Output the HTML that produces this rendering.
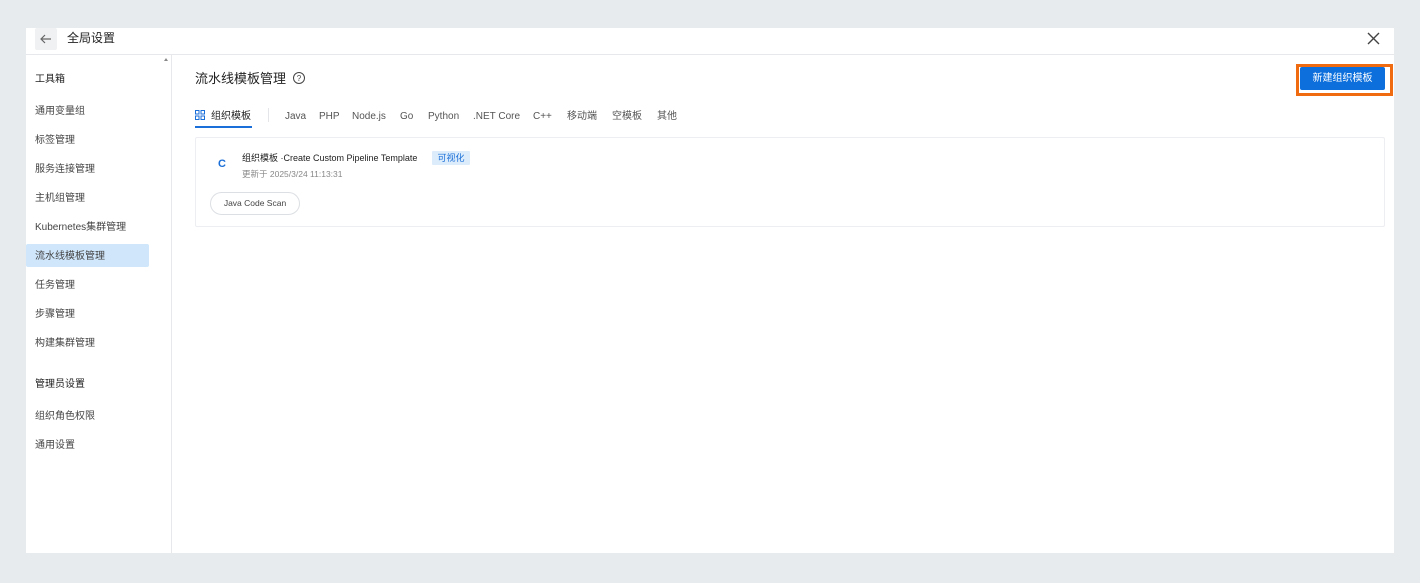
<!DOCTYPE html>
<html><head><meta charset="utf-8"><style>
*{margin:0;padding:0;box-sizing:border-box}
body{width:1420px;height:583px;background:#e8ebee;font-family:"Liberation Sans","Noto Sans CJK SC",sans-serif;position:relative;overflow:hidden;color:#333}
div{line-height:14px}
.panel{position:absolute;left:26px;top:28px;width:1368px;height:525px;background:#fff}
.hdr{position:absolute;left:0;top:0;width:1368px;height:27px;border-bottom:1px solid #e6e8eb}
.back{position:absolute;left:9px;top:0;width:22px;height:22px;background:#f0f1f3;border-radius:2px}
.ttl{position:absolute;left:41px;top:3px;font-size:12px;color:#222}
.side{position:absolute;left:0;top:27px;width:146px;height:498px;border-right:1px solid #e6e8eb}
.it{position:absolute;left:9px;font-size:10px;color:#444}
.sel{position:absolute;left:0;top:189px;width:123px;height:23px;background:#cfe6fb;border-radius:2px}
.a{position:absolute;font-size:10px;color:#555;top:110px}
</style></head><body>
<div class="panel">
 <div class="hdr">
  <div class="back"><svg width="22" height="22"><path d="M16 11H6M10 7l-4 4 4 4" stroke="#666" stroke-width="1.2" fill="none"/></svg></div>
  <div class="ttl">全局设置</div>
  <svg style="position:absolute;left:1340px;top:3px" width="16" height="16"><path d="M2 2l11 11M13 2L2 13" stroke="#444" stroke-width="1.4"/></svg>
 </div>
 <div class="side">
  <div style="position:absolute;left:138px;top:3px;width:0;height:0;border-left:2px solid transparent;border-right:2px solid transparent;border-bottom:3px solid #888"></div>
  <div class="sel"></div>
  <div class="it" style="top:18px;color:#222">工具箱</div>
  <div class="it" style="top:50px">通用变量组</div>
  <div class="it" style="top:79px">标签管理</div>
  <div class="it" style="top:108px">服务连接管理</div>
  <div class="it" style="top:137px">主机组管理</div>
  <div class="it" style="top:166px">Kubernetes集群管理</div>
  <div class="it" style="top:195px">流水线模板管理</div>
  <div class="it" style="top:224px">任务管理</div>
  <div class="it" style="top:253px">步骤管理</div>
  <div class="it" style="top:282px">构建集群管理</div>
  <div class="it" style="top:323px;color:#222">管理员设置</div>
  <div class="it" style="top:355px">组织角色权限</div>
  <div class="it" style="top:384px">通用设置</div>
 </div>
</div>
<div style="position:absolute;left:195px;top:72px;font-size:13px;color:#222">流水线模板管理</div>
<svg style="position:absolute;left:292px;top:71px" width="14" height="14"><circle cx="7" cy="7" r="5.5" stroke="#444" fill="none"/><text x="7" y="10" font-size="8" text-anchor="middle" fill="#444" font-family="Liberation Sans">?</text></svg>
<div style="position:absolute;left:1296px;top:64px;width:97px;height:32px;border:3px solid #f06a0f"></div>
<div style="position:absolute;left:1300px;top:67px;width:85px;height:23px;background:#0c6fdc;border-radius:2px;color:#fff;font-size:10px;text-align:center;line-height:23px">新建组织模板</div>
<svg style="position:absolute;left:195px;top:110px" width="10" height="10"><rect x="0.5" y="0.5" width="3.5" height="3.5" fill="none" stroke="#1b6fd8"/><rect x="6" y="0.5" width="3.5" height="3.5" fill="none" stroke="#1b6fd8"/><rect x="0.5" y="6" width="3.5" height="3.5" fill="none" stroke="#1b6fd8"/><rect x="6" y="6" width="3.5" height="3.5" fill="none" stroke="#1b6fd8"/></svg>
<div style="position:absolute;left:211px;top:110px;font-size:10px;color:#222">组织模板</div>
<div style="position:absolute;left:195px;top:126px;width:57px;height:2px;background:#1b6fd8"></div>
<div style="position:absolute;left:268px;top:108px;width:1px;height:14px;background:#e3e5e8"></div>
<div class="a" style="left:285px">Java</div>
<div class="a" style="left:319px">PHP</div>
<div class="a" style="left:352px">Node.js</div>
<div class="a" style="left:400px">Go</div>
<div class="a" style="left:428px">Python</div>
<div class="a" style="left:473px">.NET Core</div>
<div class="a" style="left:533px">C++</div>
<div class="a" style="left:567px">移动端</div>
<div class="a" style="left:612px">空模板</div>
<div class="a" style="left:657px">其他</div>
<div style="position:absolute;left:195px;top:137px;width:1190px;height:90px;border:1px solid #eceef1;border-radius:2px"></div>
<div style="position:absolute;left:218px;top:157px;font-size:11px;font-weight:bold;color:#1b6fd8">C</div>
<div style="position:absolute;left:242px;top:151px;font-size:9px;color:#222">组织模板 ·Create Custom Pipeline Template</div>
<div style="position:absolute;left:432px;top:151px;width:38px;height:14px;background:#dcecfb;color:#1b6fd8;font-size:9px;text-align:center;line-height:14px;border-radius:1px">可视化</div>
<div style="position:absolute;left:242px;top:167px;font-size:8.5px;color:#888">更新于 2025/3/24 11:13:31</div>
<div style="position:absolute;left:210px;top:192px;width:90px;height:23px;border:1px solid #dcdfe3;border-radius:12px;font-size:8.5px;color:#444;text-align:center;line-height:21px">Java Code Scan</div>
</body></html>
